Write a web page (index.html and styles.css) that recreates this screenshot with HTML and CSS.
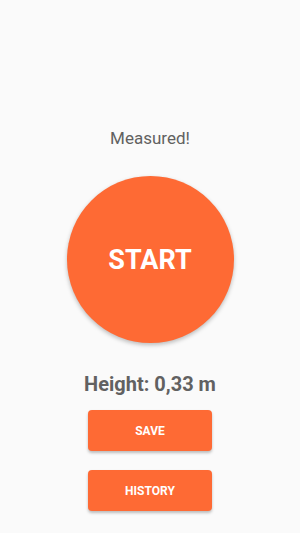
FILE: index.html
```html
<!DOCTYPE html>
<html lang="en">
<head>
  <meta charset="UTF-8">
  <meta name="viewport" content="width=device-width, initial-scale=1.0">
  <title>Measure</title>
  <link rel="stylesheet" href="styles.css">
</head>
<body>
  <div class="screen">
    <p class="status">Measured!</p>
    <button class="start-btn">START</button>
    <p class="result">Height: 0,33 m</p>
    <button class="action-btn">SAVE</button>
    <button class="action-btn">HISTORY</button>
  </div>
</body>
</html>
```

FILE: styles.css
```css
:root {
  --bg-color: #fafafa;
  --accent: #fe6a34;
  --text-color: #616161;
}

body {
  margin: 0;
  font-family: Roboto, "Noto Sans", sans-serif;
  background-color: var(--bg-color);
}

.screen {
  display: flex;
  flex-direction: column;
  align-items: center;
  height: 533px;
  padding-top: 128px;
  box-sizing: border-box;
}

.status {
  margin: 0;
  font-size: 17px;
  line-height: 20px;
  color: var(--text-color);
}

.start-btn {
  margin-top: 28px;
  width: 167px;
  height: 167px;
  border-radius: 50%;
  border: none;
  background-color: var(--accent);
  color: #fff;
  font-family: inherit;
  font-size: 27px;
  font-weight: bold;
  box-shadow: 0 2px 4px rgba(0, 0, 0, 0.25);
}

.result {
  margin: 30px 0 0;
  font-size: 20px;
  line-height: 22px;
  font-weight: bold;
  color: var(--text-color);
}

.action-btn {
  width: 124px;
  height: 41px;
  margin-top: 15px;
  border: none;
  border-radius: 4px;
  background-color: var(--accent);
  color: #fff;
  font-family: inherit;
  font-size: 12px;
  font-weight: bold;
  box-shadow: 0 2px 3px rgba(0, 0, 0, 0.25);
}

.action-btn + .action-btn {
  margin-top: 19px;
}
```
